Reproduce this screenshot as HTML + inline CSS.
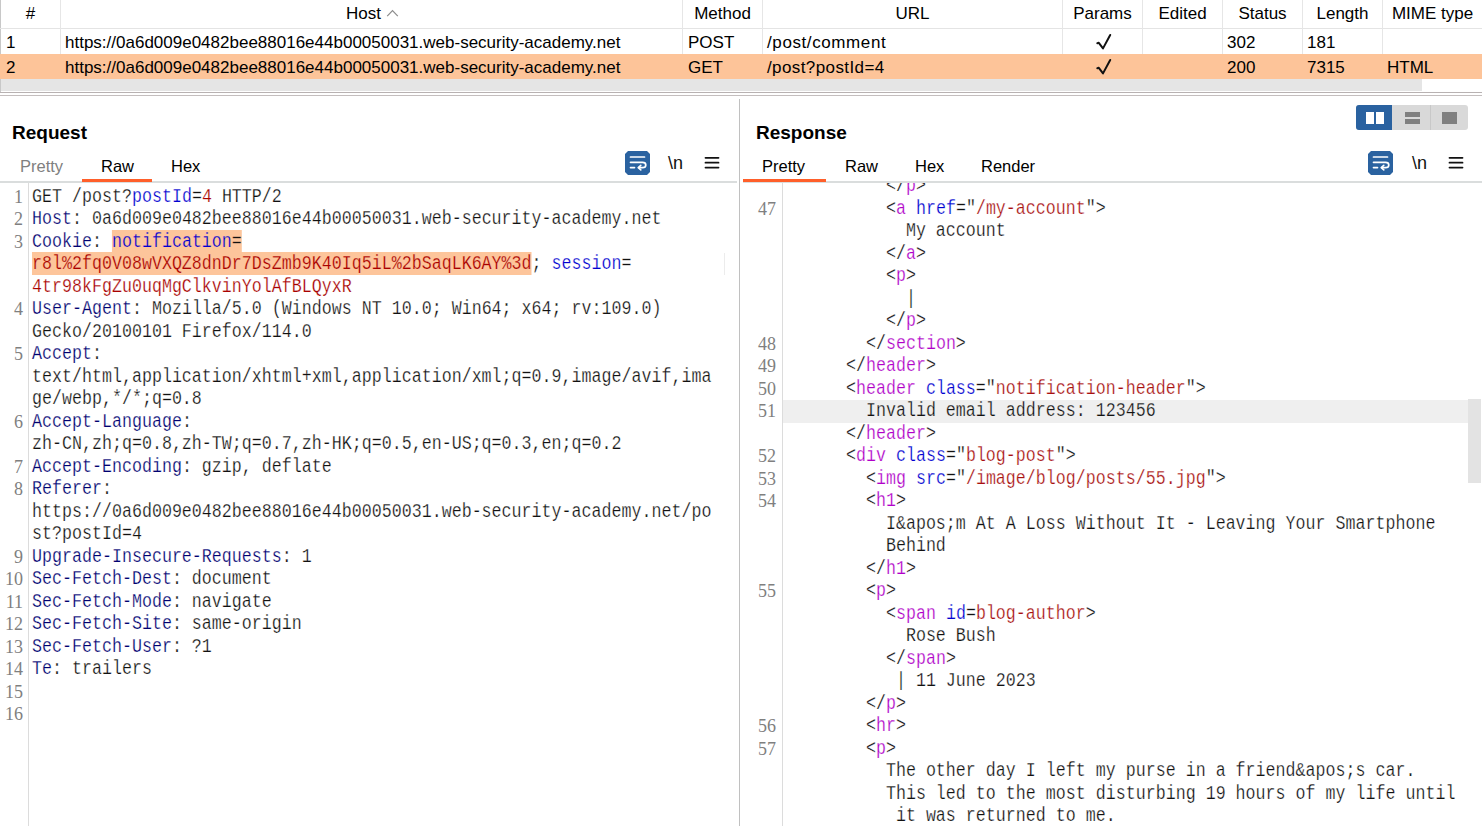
<!DOCTYPE html>
<html><head><meta charset="utf-8">
<style>
*{margin:0;padding:0;box-sizing:border-box}
html,body{width:1482px;height:826px;overflow:hidden;background:#fff}
body{position:relative;font-family:"Liberation Sans",sans-serif;color:#000}
.a{position:absolute}
.vl{position:absolute;width:1px;background:#e6e6e6}
.hd{position:absolute;top:0;height:28px;font-size:17px;line-height:28px;text-align:center;white-space:nowrap}
.cell{position:absolute;font-size:17px;white-space:nowrap;line-height:25px}
.code{position:absolute;font-family:"Liberation Mono",monospace;font-size:20px;line-height:22.5px;white-space:pre;transform-origin:0 0;transform:scaleX(0.8325);color:#111;-webkit-text-stroke:0.25px #fff}
.ln{position:absolute;font-family:"Liberation Serif",serif;font-size:18px;line-height:22.5px;white-space:pre;color:#7f7f7f;text-align:right}
.hn{color:#000070}
.pn{color:#0000d0}
.pv{color:#a80000}
.tg{color:#b000c8}
.at{color:#0000d0}
.av{color:#a81010}
.hl{background:#fdc59b;-webkit-text-stroke-color:#fdc59b}
.gb{-webkit-text-stroke-color:#efefef}
.title{position:absolute;font-weight:bold;font-size:19px}
.tab{position:absolute;font-size:16.5px}
</style></head><body>
<!-- ===== TABLE ===== -->
<div class="a" style="left:0;top:0;width:1px;height:93px;background:#c8c8c8"></div>
<div class="a" style="left:0;top:28px;width:1482px;height:1px;background:#e4e4e4"></div>
<div class="a" style="left:0;top:54px;width:1482px;height:25px;background:#fdc499"></div>
<div class="a" style="left:1px;top:79px;width:1421px;height:12px;background:#e5e5e5"></div>
<div class="a" style="left:0;top:92px;width:1482px;height:1px;background:#b8b2b2"></div>
<div class="a" style="left:0;top:95px;width:1482px;height:1px;background:#c4bebe"></div>
<div class="vl" style="left:60px;top:0;height:54px"></div>
<div class="vl" style="left:682px;top:0;height:54px"></div>
<div class="vl" style="left:762px;top:0;height:54px"></div>
<div class="vl" style="left:1062px;top:0;height:54px"></div>
<div class="vl" style="left:1142px;top:0;height:54px"></div>
<div class="vl" style="left:1222px;top:0;height:54px"></div>
<div class="vl" style="left:1302px;top:0;height:54px"></div>
<div class="vl" style="left:1382px;top:0;height:54px"></div>

<div class="hd" style="left:1px;width:59px">#</div>
<div class="hd" style="left:346px;width:40px;text-align:left">Host</div><svg class="a" style="left:386px;top:9px" width="14" height="9" viewBox="0 0 14 9"><path d="M1.2 7.2 L6.5 1.6 L11.8 7.2" fill="none" stroke="#8c8c8c" stroke-width="1.2"/></svg>
<div class="hd" style="left:683px;width:79px">Method</div>
<div class="hd" style="left:763px;width:299px">URL</div>
<div class="hd" style="left:1063px;width:79px">Params</div>
<div class="hd" style="left:1143px;width:79px">Edited</div>
<div class="hd" style="left:1223px;width:79px">Status</div>
<div class="hd" style="left:1303px;width:79px">Length</div>
<div class="hd" style="left:1383px;width:99px">MIME type</div>

<div class="cell" style="left:6px;top:30px">1</div>
<div class="cell" style="left:65px;top:30px">https://0a6d009e0482bee88016e44b00050031.web-security-academy.net</div>
<div class="cell" style="left:688px;top:30px">POST</div>
<div class="cell" style="left:767px;top:30px;letter-spacing:0.6px">/post/comment</div>
<div class="cell" style="left:1227px;top:30px">302</div>
<div class="cell" style="left:1307px;top:30px">181</div>

<div class="cell" style="left:6px;top:55px">2</div>
<div class="cell" style="left:65px;top:55px">https://0a6d009e0482bee88016e44b00050031.web-security-academy.net</div>
<div class="cell" style="left:688px;top:55px">GET</div>
<div class="cell" style="left:767px;top:55px;letter-spacing:0.4px">/post?postId=4</div>
<div class="cell" style="left:1227px;top:55px">200</div>
<div class="cell" style="left:1307px;top:55px">7315</div>
<div class="cell" style="left:1387px;top:55px">HTML</div>

<svg class="a" style="left:1096px;top:33px" width="16" height="18" viewBox="0 0 16 18"><path d="M1.3 10.2 L2.8 9.8 L7 15.4 L14.2 2" fill="none" stroke="#111" stroke-width="2" stroke-linejoin="round" stroke-linecap="round"/></svg>
<svg class="a" style="left:1096px;top:58px" width="16" height="18" viewBox="0 0 16 18"><path d="M1.3 10.2 L2.8 9.8 L7 15.4 L14.2 2" fill="none" stroke="#111" stroke-width="2" stroke-linejoin="round" stroke-linecap="round"/></svg>

<!-- ===== PANE DIVIDER ===== -->
<div class="a" style="left:739px;top:99px;width:1px;height:727px;background:#c0c0c0"></div>


<!-- ===== REQUEST PANE ===== -->
<div class="title" style="left:12px;top:122px">Request</div>
<div class="tab" style="left:20px;top:157px;color:#808080">Pretty</div>
<div class="tab" style="left:101px;top:157px">Raw</div>
<div class="tab" style="left:171px;top:157px">Hex</div>
<div class="a" style="left:0;top:181px;width:737px;height:2px;background:#dadddd"></div>
<div class="a" style="left:82px;top:179px;width:70px;height:2.6px;background:#ff5f2a"></div>
<div class="a" style="left:28px;top:183px;width:1px;height:643px;background:#dcdcdc"></div>
<div class="a" style="left:724px;top:253px;width:1px;height:22px;background:#ececec"></div>
<!-- icons -->
<svg class="a" style="left:625px;top:150px" width="27" height="26" viewBox="0 0 27 26"><path d="M3 1H22L25 4V22L22 25H3L0 22V4Z" fill="#2a62a0"/><path d="M5.5 7H19.5 M5.5 12.3H17.5 Q20.8 12.3 20.8 14.9 Q20.8 17.6 17.5 17.6 H14" fill="none" stroke="#fff" stroke-width="1.7" stroke-linecap="round"/><path d="M15.8 15.3 L13.2 17.6 L15.8 19.9" fill="none" stroke="#fff" stroke-width="1.6" stroke-linecap="round" stroke-linejoin="round"/><path d="M5.5 17.6H9.5" stroke="#fff" stroke-width="1.7" stroke-linecap="round"/></svg>
<div class="a" style="left:668px;top:152px;font-size:18px;line-height:22px;color:#111">\n</div>
<svg class="a" style="left:704px;top:155px" width="16" height="15" viewBox="0 0 16 15"><path d="M1.5 2.8H14.5M1.5 7.7H14.5M1.5 12.6H14.5" stroke="#111" stroke-width="1.8" stroke-linecap="round"/></svg>

<div class="ln" style="left:-97px;top:185.6px;width:120px">1
2
3


4

5


6

7
8


9
10
11
12
13
14
15
16</div>
<div class="code" style="left:32px;top:185.6px">GET /post?<span class="pn">postId</span>=<span class="pv">4</span> HTTP/2
<span class="hn">Host</span>: 0a6d009e0482bee88016e44b00050031.web-security-academy.net
<span class="hn">Cookie</span>: <span class="hl"><span class="pn">notification</span>=</span>
<span class="hl"><span class="pv">r8l%2fq0V08wVXQZ8dnDr7DsZmb9K40Iq5iL%2bSaqLK6AY%3d</span></span>; <span class="pn">session</span>=
<span class="pv">4tr98kFgZu0uqMgClkvinYolAfBLQyxR</span>
<span class="hn">User-Agent</span>: Mozilla/5.0 (Windows NT 10.0; Win64; x64; rv:109.0)
Gecko/20100101 Firefox/114.0
<span class="hn">Accept</span>:
text/html,application/xhtml+xml,application/xml;q=0.9,image/avif,ima
ge/webp,*/*;q=0.8
<span class="hn">Accept-Language</span>:
zh-CN,zh;q=0.8,zh-TW;q=0.7,zh-HK;q=0.5,en-US;q=0.3,en;q=0.2
<span class="hn">Accept-Encoding</span>: gzip, deflate
<span class="hn">Referer</span>:
https://0a6d009e0482bee88016e44b00050031.web-security-academy.net/po
st?postId=4
<span class="hn">Upgrade-Insecure-Requests</span>: 1
<span class="hn">Sec-Fetch-Dest</span>: document
<span class="hn">Sec-Fetch-Mode</span>: navigate
<span class="hn">Sec-Fetch-Site</span>: same-origin
<span class="hn">Sec-Fetch-User</span>: ?1
<span class="hn">Te</span>: trailers</div>

<!-- ===== RESPONSE PANE ===== -->
<div class="title" style="left:756px;top:122px">Response</div>
<div class="tab" style="left:762px;top:157px">Pretty</div>
<div class="tab" style="left:845px;top:157px">Raw</div>
<div class="tab" style="left:915px;top:157px">Hex</div>
<div class="tab" style="left:981px;top:157px">Render</div>
<div class="a" style="left:743px;top:181px;width:739px;height:2px;background:#dadddd"></div>
<div class="a" style="left:743px;top:179px;width:83px;height:2.6px;background:#ff5f2a"></div>
<div class="a" style="left:782px;top:183px;width:1px;height:643px;background:#dcdcdc"></div>
<div class="a" style="left:783px;top:400px;width:685px;height:22.5px;background:#efefef"></div>
<div class="a" style="left:1468px;top:399px;width:13px;height:84px;background:#e3e3e3"></div>
<!-- layout toggles -->
<div class="a" style="left:1356px;top:105px;width:112px;height:25px;border-radius:3px;background:#d9d9d9;overflow:hidden">
 <div class="a" style="left:0;top:0;width:36px;height:25px;background:#2a62a0"></div>
 <div class="a" style="left:74px;top:0;width:1px;height:25px;background:#c8c8c8"></div>
 <div class="a" style="left:9.7px;top:7.2px;width:8.8px;height:11.8px;background:#fff"></div>
 <div class="a" style="left:19.7px;top:7.2px;width:8.5px;height:11.8px;background:#fff"></div>
 <div class="a" style="left:49.2px;top:7.2px;width:14.6px;height:4.7px;background:#808080"></div>
 <div class="a" style="left:49.2px;top:14.1px;width:14.6px;height:4.8px;background:#808080"></div>
 <div class="a" style="left:86px;top:7.2px;width:15px;height:11.8px;background:#808080"></div>
</div>
<svg class="a" style="left:1368px;top:150px" width="27" height="26" viewBox="0 0 27 26"><path d="M3 1H22L25 4V22L22 25H3L0 22V4Z" fill="#2a62a0"/><path d="M5.5 7H19.5 M5.5 12.3H17.5 Q20.8 12.3 20.8 14.9 Q20.8 17.6 17.5 17.6 H14" fill="none" stroke="#fff" stroke-width="1.7" stroke-linecap="round"/><path d="M15.8 15.3 L13.2 17.6 L15.8 19.9" fill="none" stroke="#fff" stroke-width="1.6" stroke-linecap="round" stroke-linejoin="round"/><path d="M5.5 17.6H9.5" stroke="#fff" stroke-width="1.7" stroke-linecap="round"/></svg>
<div class="a" style="left:1412px;top:152px;font-size:18px;line-height:22px;color:#111">\n</div>
<svg class="a" style="left:1448px;top:155px" width="16" height="15" viewBox="0 0 16 15"><path d="M1.5 2.8H14.5M1.5 7.7H14.5M1.5 12.6H14.5" stroke="#111" stroke-width="1.8" stroke-linecap="round"/></svg>

<div class="a" style="left:741px;top:183px;width:741px;height:643px;overflow:hidden">
<div class="ln" style="left:-85px;top:-7.9px;width:120px">
47





48
49
50
51

52
53
54



55





56
57</div>
<div class="code" style="left:45px;top:-7.9px">          &lt;/<span class="tg">p</span>&gt;
          &lt;<span class="tg">a</span> <span class="at">href</span>="<span class="av">/my-account</span>"&gt;
            My account
          &lt;/<span class="tg">a</span>&gt;
          &lt;<span class="tg">p</span>&gt;
            |
          &lt;/<span class="tg">p</span>&gt;
        &lt;/<span class="tg">section</span>&gt;
      &lt;/<span class="tg">header</span>&gt;
      &lt;<span class="tg">header</span> <span class="at">class</span>="<span class="av">notification-header</span>"&gt;
        <span class="gb">Invalid email address: 123456</span>
      &lt;/<span class="tg">header</span>&gt;
      &lt;<span class="tg">div</span> <span class="at">class</span>="<span class="av">blog-post</span>"&gt;
        &lt;<span class="tg">img</span> <span class="at">src</span>="<span class="av">/image/blog/posts/55.jpg</span>"&gt;
        &lt;<span class="tg">h1</span>&gt;
          I&amp;apos;m At A Loss Without It - Leaving Your Smartphone
          Behind
        &lt;/<span class="tg">h1</span>&gt;
        &lt;<span class="tg">p</span>&gt;
          &lt;<span class="tg">span</span> <span class="at">id</span>=<span class="av">blog-author</span>&gt;
            Rose Bush
          &lt;/<span class="tg">span</span>&gt;
           | 11 June 2023
        &lt;/<span class="tg">p</span>&gt;
        &lt;<span class="tg">hr</span>&gt;
        &lt;<span class="tg">p</span>&gt;
          The other day I left my purse in a friend&amp;apos;s car.
          This led to the most disturbing 19 hours of my life until
           it was returned to me.</div>
</div>

</body></html>
